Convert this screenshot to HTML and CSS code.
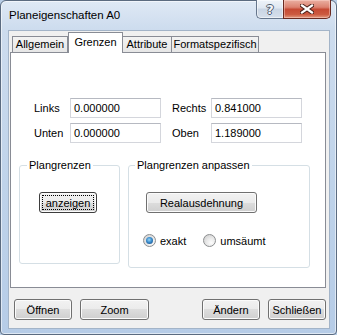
FILE: index.html
```html
<!DOCTYPE html>
<html lang="de">
<head>
<meta charset="utf-8">
<title>Planeigenschaften A0</title>
<link rel="stylesheet" href="styles.css">
</head>
<body>
<div class="window">
  <div class="titlebar">
    <span class="title">Planeigenschaften A0</span>
    <div class="caption-btns">
      <div class="cbtn help"><span class="q">?</span></div>
      <div class="cbtn close">
        <svg width="14" height="10" viewBox="0 0 14 10">
          <path d="M2 1.5 L12 8.5 M12 1.5 L2 8.5" stroke="#4a2019" stroke-width="4.2" stroke-linecap="square" fill="none"/>
          <path d="M2 1.5 L12 8.5 M12 1.5 L2 8.5" stroke="#ffffff" stroke-width="2.2" stroke-linecap="square" fill="none"/>
        </svg>
      </div>
    </div>
  </div>
  <div class="client">
    <div class="tabs">
      <div class="tab t-allg">Allgemein</div>
      <div class="tab t-gren active">Grenzen</div>
      <div class="tab t-attr">Attribute</div>
      <div class="tab t-form">Formatspezifisch</div>
    </div>
    <div class="panel">
      <div class="fields">
        <span class="lbl">Links</span>
        <div class="input">0.000000</div>
        <span class="lbl lbl-r">Rechts</span>
        <div class="input">0.841000</div>
        <span class="lbl">Unten</span>
        <div class="input">0.000000</div>
        <span class="lbl lbl-r">Oben</span>
        <div class="input">1.189000</div>
      </div>
      <div class="groups">
        <div class="group g1">
          <div class="legend">Plangrenzen</div>
          <button class="btn focus b-anz">anzeigen</button>
        </div>
        <div class="group g2">
          <div class="legend">Plangrenzen anpassen</div>
          <button class="btn b-real">Realausdehnung</button>
          <div class="radios">
            <span class="radio checked"></span><span class="rlabel">exakt</span>
            <span class="radio r2"></span><span class="rlabel">umsäumt</span>
          </div>
        </div>
      </div>
    </div>
    <div class="actions">
      <button class="btn b-std">Öffnen</button>
      <button class="btn b-zoom">Zoom</button>
      <span class="spacer"></span>
      <button class="btn b-std">Ändern</button>
      <button class="btn b-std">Schließen</button>
    </div>
  </div>
</div>
</body>
</html>
```

FILE: styles.css
```css
html, body {
  margin: 0;
  padding: 0;
  background: #b8cde6;
}

body {
  font-family: "Liberation Sans", Arial, sans-serif;
  font-size: 11px;
  color: #000;
}

.window {
  box-sizing: border-box;
  width: 337px;
  height: 335px;
  border: 1px solid #5b6b80;
  border-radius: 6px 6px 4px 4px;
  padding: 0 6px 5px 7px;
  background: linear-gradient(#dfe9f5 0, #cddcee 28px, #bfd3ea 55%, #b6cce7 100%);
  box-shadow: inset 0 0 0 1px rgba(255, 255, 255, 0.55);
  display: flex;
  flex-direction: column;
}

.titlebar {
  height: 29px;
  display: flex;
  flex: none;
}

.title {
  padding-left: 1px;
  line-height: 29px;
  font-size: 11.5px;
  color: #000;
}

.caption-btns {
  margin-left: auto;
  margin-right: -1px;
  margin-top: -1px;
  display: flex;
  height: 19px;
  align-self: flex-start;
}

.cbtn {
  box-sizing: border-box;
  height: 19px;
  display: flex;
  align-items: center;
  justify-content: center;
}

.help {
  width: 27px;
  border: 1px solid #66768c;
  border-top: none;
  border-right: none;
  border-radius: 0 0 0 5px;
  background: linear-gradient(#eef3f9 0, #dfe7f1 45%, #c9d5e4 50%, #d6dfeb 100%);
  box-shadow: inset 0 0 0 1px rgba(255, 255, 255, 0.5);
}

.q {
  font-family: "DejaVu Sans", sans-serif;
  font-weight: bold;
  font-size: 13px;
  line-height: 13px;
  color: #f4f6f9;
  text-shadow: 1px 0 0 #4d5b6e, -1px 0 0 #4d5b6e, 0 1px 0 #4d5b6e, 0 -1px 0 #4d5b6e;
}

.close {
  width: 48px;
  border: 1px solid #6a2a21;
  border-top: none;
  border-radius: 0 0 5px 0;
  background: linear-gradient(#eab0a2 0, #dc8270 40%, #c64a34 52%, #cc5a40 80%, #e29a80 100%);
  box-shadow: inset 0 0 0 1px rgba(255, 220, 210, 0.45);
}

.close svg {
  display: block;
}

.client {
  flex: 1;
  border: 1px solid #a3b4c8;
  background: #f0f0f0;
  display: flex;
  flex-direction: column;
  padding-bottom: 8px;
}

/* Tabs */
.tabs {
  height: 21px;
  display: flex;
  align-items: flex-end;
  padding-left: 3px;
  flex: none;
}

.tab {
  box-sizing: border-box;
  height: 16px;
  border: 1px solid #898c95;
  border-bottom: none;
  border-left: none;
  background: linear-gradient(#f3f3f3, #e6e6e6);
  line-height: 15px;
  text-align: center;
  white-space: nowrap;
}

.t-allg { width: 56px; border-left: 1px solid #898c95; }
.t-gren { width: 55px; }
.t-attr { width: 49px; border-left: none; }
.t-form { width: 87px; }

.tab.active {
  height: 21px;
  margin-bottom: -1px;
  padding-top: 2px;
  background: #fff;
  position: relative;
  z-index: 1;
  border-left: 1px solid #898c95;
}

.panel {
  box-sizing: border-box;
  height: 236px;
  margin: 0 3px 0 1px;
  border: 1px solid #898c95;
  background: #fff;
  flex: none;
  padding: 45px 0 0 23px;
}

.fields {
  display: grid;
  grid-template-columns: 36px 91px 50px 91px;
  grid-auto-rows: 20px;
  row-gap: 5px;
  align-items: center;
}

.lbl-r {
  padding-left: 11px;
}

.input {
  box-sizing: border-box;
  height: 20px;
  border: 1px solid #d4d6dc;
  border-top-color: #b6b9c1;
  padding-left: 3px;
  line-height: 18px;
  background: #fff;
}

.groups {
  display: flex;
  align-items: flex-start;
  gap: 8px;
  margin-top: 22px;
  margin-left: -15px;
}

.group {
  box-sizing: border-box;
  border: 1px solid #d5dfe5;
  border-radius: 3px;
}

.legend {
  width: fit-content;
  line-height: 13px;
  padding: 0 2px;
  margin: -7px 0 0 7px;
  background: #fff;
}

.g1 {
  width: 101px;
  padding: 0 0 50px 19px;
}

.g2 {
  width: 182px;
  padding: 0 0 20px 17px;
}

.g2 .legend {
  margin-left: 6px;
}

.g1 .btn,
.g2 .btn {
  margin-top: 20px;
}

.g1 .legend { margin-left: -12px; }
.g2 .legend { margin-left: -11px; }

.btn {
  box-sizing: border-box;
  display: block;
  height: 21px;
  padding: 0;
  font-family: "Liberation Sans", Arial, sans-serif;
  font-size: 11px;
  color: #000;
  border: 1px solid #707070;
  border-radius: 3px;
  background: linear-gradient(#f2f2f2 0, #ebebeb 50%, #dddddd 50%, #cfcfcf 100%);
  box-shadow: inset 0 0 0 1px #fbfbfb;
}

.b-anz { width: 58px; }
.b-real { width: 111px; }
.b-std { width: 58px; }
.b-zoom { width: 69px; }

.focus {
  border-color: #3d3d3d;
  outline: 1px dotted #000;
  outline-offset: -4px;
}

.radios {
  display: flex;
  align-items: center;
  height: 13px;
  margin-top: 21px;
  margin-left: -3px;
}

.radio {
  box-sizing: border-box;
  width: 13px;
  height: 13px;
  border-radius: 50%;
  border: 1px solid #8c8e90;
  background: radial-gradient(circle at 65% 70%, #fdfdfd 0, #e8e8e8 45%, #c9c9c9 100%);
  display: flex;
  align-items: center;
  justify-content: center;
  flex: none;
}

.radio.checked::after {
  content: "";
  width: 7px;
  height: 7px;
  border-radius: 50%;
  background: radial-gradient(circle at 45% 40%, #9ad6f7 0, #3a8ccc 45%, #0e3e78 100%);
}

.rlabel {
  margin-left: 4px;
}

.r2 {
  margin-left: 17px;
}

.actions {
  display: flex;
  gap: 8px;
  margin-top: 11px;
  padding: 0 3px 0 5px;
  flex: none;
}

.spacer {
  flex: 1;
}
```
